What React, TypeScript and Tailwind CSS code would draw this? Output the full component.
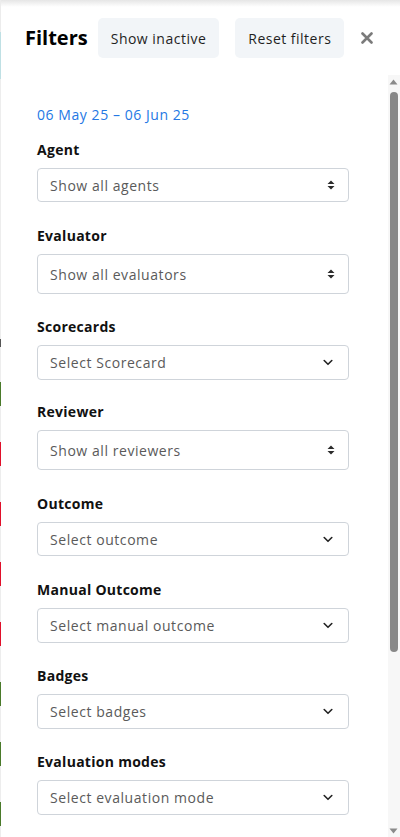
import type { ReactNode } from 'react'

type Field = { label: string; placeholder: string; kind: 'sort' | 'chevron'; h: string; mb: string }

const fields: Field[] = [
  { label: 'Agent', placeholder: 'Show all agents', kind: 'sort', h: 'h-[34px]', mb: 'mb-[24px]' },
  { label: 'Evaluator', placeholder: 'Show all evaluators', kind: 'sort', h: 'h-[40px]', mb: 'mb-[23px]' },
  { label: 'Scorecards', placeholder: 'Select Scorecard', kind: 'chevron', h: 'h-[35px]', mb: 'mb-[22px]' },
  { label: 'Reviewer', placeholder: 'Show all reviewers', kind: 'sort', h: 'h-[40px]', mb: 'mb-[24px]' },
  { label: 'Outcome', placeholder: 'Select outcome', kind: 'chevron', h: 'h-[34px]', mb: 'mb-[24px]' },
  { label: 'Manual Outcome', placeholder: 'Select manual outcome', kind: 'chevron', h: 'h-[35px]', mb: 'mb-[23px]' },
  { label: 'Badges', placeholder: 'Select badges', kind: 'chevron', h: 'h-[35px]', mb: 'mb-[23px]' },
  { label: 'Evaluation modes', placeholder: 'Select evaluation mode', kind: 'chevron', h: 'h-[35px]', mb: 'mb-[23px]' },
]

// strip of the page that peeks out behind the drawer
const edge: [number, string][] = [
  [32, '#ececec'], [47, '#bfe0e4'], [260, '#ededed'], [8, '#555555'], [35, '#ededed'], [24, '#4a7a2a'],
  [36, '#ededed'], [24, '#e0102a'], [36, '#ededed'], [24, '#e0102a'], [36, '#ededed'], [24, '#e0102a'],
  [36, '#ededed'], [24, '#e0102a'], [36, '#ededed'], [24, '#4a7a2a'], [36, '#ededed'], [24, '#4a7a2a'],
  [36, '#ededed'], [24, '#4a7a2a'], [11, '#ededed'],
]

function SortIcon() {
  return (
    <svg width="8" height="10" viewBox="0 0 8 10" className="shrink-0">
      <path d="M4 0.5L7.5 4H0.5Z M0.5 6H7.5L4 9.5Z" fill="#2b2b2b" />
    </svg>
  )
}

function ChevronIcon() {
  return (
    <svg width="10" height="7" viewBox="0 0 10 7" className="shrink-0">
      <path d="M1.2 1.5l3.8 3.8 3.8-3.8" stroke="#222" strokeWidth="1.6" fill="none" strokeLinecap="round" strokeLinejoin="round" />
    </svg>
  )
}

function Select({ field }: { field: Field }) {
  return (
    <div
      className={`flex ${field.h} w-[312px] items-center justify-between rounded-[4px] border border-[#cfd4da] bg-white pl-[12px] pr-[12px] text-[14px] tracking-[0.04em] text-[#5a5a5a]`}
    >
      <span>{field.placeholder}</span>
      <span className={field.kind === 'sort' ? 'mr-[1px]' : 'mr-[3px]'}>
        {field.kind === 'sort' ? <SortIcon /> : <ChevronIcon />}
      </span>
    </div>
  )
}

function HeaderButton({ children }: { children: ReactNode }) {
  return (
    <button className="h-10 rounded-[5px] bg-[#f2f5f8] px-[13px] text-[14px] font-medium tracking-[0.035em] text-[#1f1f1f]">
      {children}
    </button>
  )
}

export default function App() {
  return (
    <div className="flex h-[837px] w-[400px] overflow-hidden bg-white font-['Open_Sans',sans-serif]">
      <div className="flex w-px shrink-0 flex-col">
        {edge.map(([h, c], i) => (
          <div key={i} style={{ height: h, background: c }} />
        ))}
      </div>

      <div className="relative flex min-w-0 flex-1 flex-col">
        <div className="pointer-events-none absolute inset-x-0 top-0 h-[7px] bg-gradient-to-b from-[#e6e6e6] to-transparent" />

        <header className="flex h-[75px] shrink-0 items-start pl-6 pt-[18px]">
          <div className="flex h-10 items-center">
            <h2 className="mr-[10px] text-[20px] font-bold text-black">Filters</h2>
            <div className="flex gap-4">
              <HeaderButton>Show inactive</HeaderButton>
              <HeaderButton>Reset filters</HeaderButton>
            </div>
            <button className="ml-[11px] flex h-6 w-6 items-center justify-center" aria-label="Close">
              <svg width="12" height="12" viewBox="0 0 12 12">
                <path d="M1.5 1.5l9 9M10.5 1.5l-9 9" stroke="#7b7b7b" strokeWidth="2.6" strokeLinecap="round" />
              </svg>
            </button>
          </div>
        </header>

        <div className="flex min-h-0 flex-1">
          <div className="flex-1 pl-9 pt-[30px]">
            <div className="mb-[15px] text-[14px] leading-5 tracking-[0.04em] text-[#2478e4]">06 May 25 – 06 Jun 25</div>
            {fields.map((f) => (
              <div key={f.label} className={f.mb}>
                <div className="mb-2 text-[14px] font-bold leading-5 tracking-[0.02em] text-[#111]">{f.label}</div>
                <Select field={f} />
              </div>
            ))}
          </div>

          <div className="flex w-[12px] shrink-0 flex-col items-center bg-[#f7f7f7] pr-[1px]">
            <svg width="9" height="6" viewBox="0 0 9 6" className="mt-[4px]">
              <path d="M4.5 0.5L8.5 5.5H0.5Z" fill="#8a8a8a" />
            </svg>
            <div className="mt-[7px] h-[560px] w-[8px] rounded-full bg-[#888]" />
            <div className="flex-1" />
            <svg width="9" height="6" viewBox="0 0 9 6" className="mb-[3px]">
              <path d="M0.5 0.5H8.5L4.5 5.5Z" fill="#8a8a8a" />
            </svg>
          </div>
        </div>
      </div>
    </div>
  )
}
